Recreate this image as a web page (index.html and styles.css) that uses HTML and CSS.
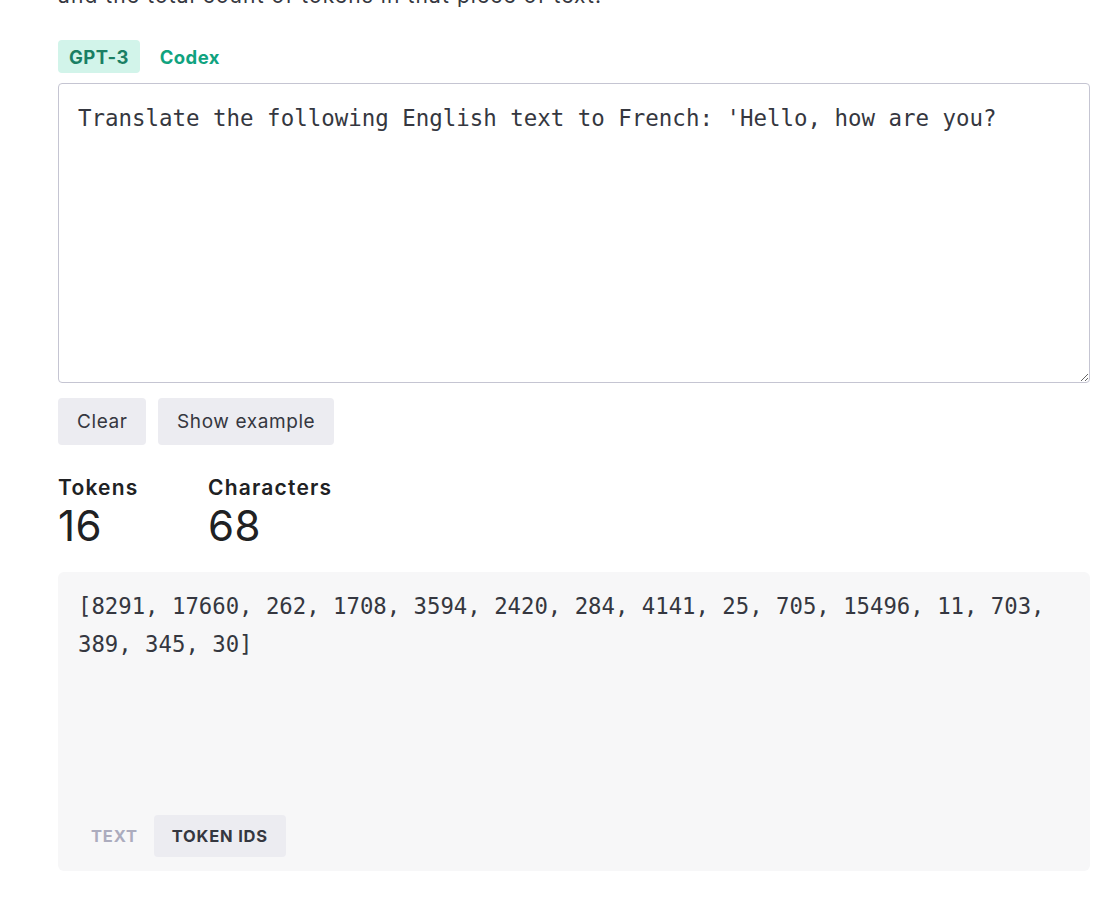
FILE: index.html
```html
<!DOCTYPE html>
<html lang="en">
<head>
<meta charset="utf-8">
<title>Tokenizer</title>
<link rel="stylesheet" href="styles.css">
</head>
<body>
<main class="page">
  <p class="intro">and the total count of tokens in that piece of text.</p>
  <div class="model-tabs">
    <button class="model-tab active">GPT-3</button>
    <button class="model-tab">Codex</button>
  </div>
  <textarea class="prompt">Translate the following English text to French: 'Hello, how are you?</textarea>
  <div class="actions">
    <button class="btn">Clear</button>
    <button class="btn">Show example</button>
  </div>
  <div class="stats">
    <div class="stat">
      <div class="stat-label">Tokens</div>
      <div class="stat-value">16</div>
    </div>
    <div class="stat">
      <div class="stat-label">Characters</div>
      <div class="stat-value">68</div>
    </div>
  </div>
  <section class="output">
    <div class="token-ids">[8291, 17660, 262, 1708, 3594, 2420, 284, 4141, 25, 705, 15496, 11, 703, 389, 345, 30]</div>
    <div class="view-tabs">
      <button class="view-tab">Text</button>
      <button class="view-tab active">Token IDs</button>
    </div>
  </section>
</main>
</body>
</html>
```

FILE: styles.css
```css
* { box-sizing: border-box; }
html, body { margin: 0; padding: 0; background: #ffffff; }
body {
  font-family: Inter, "Noto Sans", "Liberation Sans", sans-serif;
  color: #353740;
  overflow: hidden;
}
.page {
  width: 1032px;
  margin-left: 58px;
}
.intro {
  margin: -18px 0 0 0;
  font-size: 21px;
  line-height: 28px;
  letter-spacing: 1.1px;
  color: #353740;
}
.model-tabs {
  display: flex;
  gap: 9px;
  margin-top: 30px;
}
.model-tab {
  height: 33px;
  padding: 0 11px;
  border: none;
  border-radius: 4px;
  background: transparent;
  font-family: inherit;
  font-size: 18.5px;
  font-weight: 700;
  letter-spacing: 0.4px;
  color: #10a37f;
  cursor: pointer;
}
.model-tab.active {
  background: #d2f4ea;
  color: #1a7f64;
}
.prompt {
  display: block;
  width: 100%;
  height: 300px;
  margin-top: 10px;
  padding: 18px 19px 16px;
  border: 1px solid #c5c5d2;
  border-radius: 4px;
  font-family: "DejaVu Sans Mono", "Liberation Mono", monospace;
  font-size: 22.45px;
  line-height: 33px;
  color: #353740;
  background: #fff;
  resize: vertical;
  outline: none;
}
.actions {
  display: flex;
  gap: 12px;
  margin-top: 15px;
}
.btn {
  height: 47px;
  padding: 0 18.5px 0 19px;
  border: none;
  border-radius: 4px;
  background: #ececf1;
  font-family: inherit;
  font-size: 19px;
  letter-spacing: 0.6px;
  color: #353740;
}
.stats {
  display: grid;
  grid-template-columns: 150px auto;
  margin-top: 29px;
}
.stat-label {
  font-size: 21px;
  line-height: 28px;
  font-weight: 600;
  letter-spacing: 1.2px;
  color: #202123;
}
.stat-value {
  font-size: 42px;
  line-height: 48px;
  font-weight: 400;
  letter-spacing: 0.5px;
  color: #202123;
}
.output {
  display: flex;
  flex-direction: column;
  height: 299px;
  margin-top: 22px;
  padding: 15px 20px 14px 14px;
  background: #f7f7f8;
  border-radius: 6px;
}
.token-ids {
  flex: 1;
  padding-left: 6px;
  font-family: "DejaVu Sans Mono", "Liberation Mono", monospace;
  font-size: 22.3px;
  line-height: 38px;
  color: #353740;
}
.view-tabs {
  display: flex;
  margin-left: 1px;
}
.view-tab {
  height: 42px;
  padding: 0 18px;
  border: none;
  border-radius: 4px;
  background: transparent;
  font-family: inherit;
  font-size: 16.5px;
  font-weight: 700;
  letter-spacing: 0.8px;
  text-transform: uppercase;
  color: #acacbe;
}
.view-tab.active {
  margin-left: -2px;
  background: #ececf1;
  color: #353740;
}
```
